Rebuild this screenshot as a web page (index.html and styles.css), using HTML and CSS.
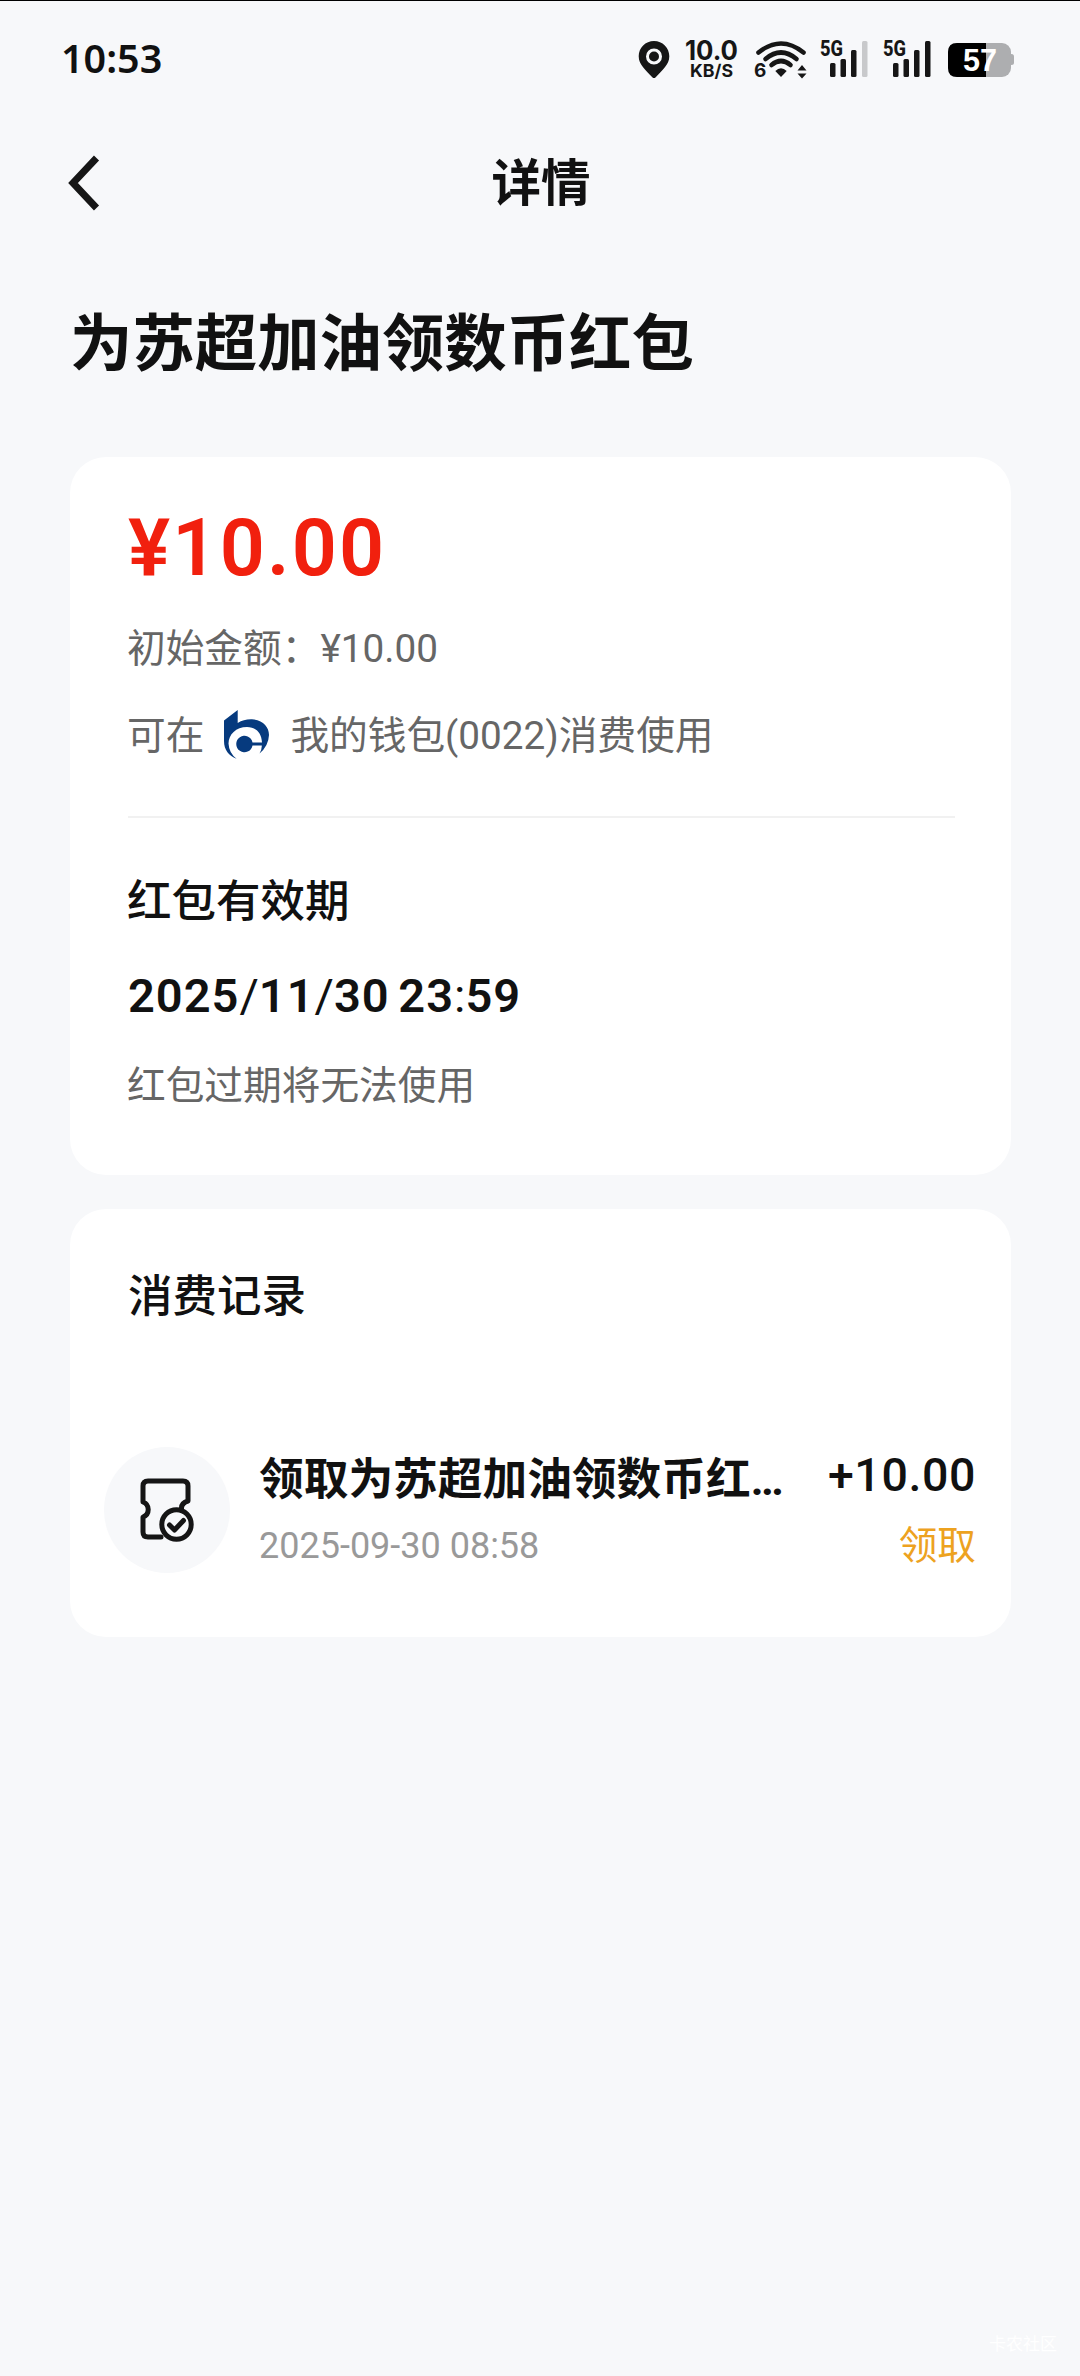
FILE: index.html
```html
<!DOCTYPE html>
<html lang="zh-CN">
<head>
<meta charset="utf-8">
<title>详情</title>
<link rel="stylesheet" href="styles.css">
</head>
<body>
<div class="screen">
  <header class="status">
    <span class="clock">10:53</span>
    <div class="indicators">
      <svg class="pin" width="32" height="40" viewBox="0 0 32 40"><path fill-rule="evenodd" d="M16 1C7.500 1 .7 7.800.7 16.200C.7 25 8 30 14.300 37.200Q16 39 17.700 37.200C24 30 31.300 25 31.300 16.200C31.300 7.800 24.500 1 16 1ZM16 8.500a8 8 0 1 1 0 16a8 8 0 0 1 0-16Z"/><circle cx="16" cy="16.500" r="5"/></svg>
      <svg class="speed" width="56" height="40" viewBox="0 0 56 40"><text x="1" y="20" font-size="27" textLength="53" lengthAdjust="spacingAndGlyphs">10.0</text><text x="6" y="36.500" font-size="17.500" textLength="43" lengthAdjust="spacingAndGlyphs">KB/S</text></svg>
      <svg class="wifi" width="54" height="40" viewBox="0 0 54 40"><g class="arc"><path d="M4.500 12.500Q27-5.500 49.500 12.500"/><path d="M11.500 19Q27 6 42.500 19"/><path d="M17.500 25Q27 17 36.500 25"/></g><path d="M21.300 31Q27 25.500 32.700 31L27 37Z"/><path d="M43.500 30.500L48 25L52.500 30.500ZM43.500 33.500H52.500L48 38.500Z"/><text x="0" y="37" font-size="19">6</text></svg>
      <svg class="signal" width="49" height="40" viewBox="0 0 49 40"><text x="0" y="16" font-size="22" textLength="23" lengthAdjust="spacingAndGlyphs">5G</text><rect x="10" y="23" width="5.500" height="14" rx="1.500"/><rect x="20.500" y="19" width="5.500" height="18" rx="1.500"/><rect x="31" y="10" width="5.500" height="27" rx="1.500"/><rect class="off" x="42" y="1" width="5.500" height="36" rx="1.500"/></svg>
      <svg class="signal" width="49" height="40" viewBox="0 0 49 40"><text x="0" y="16" font-size="22" textLength="23" lengthAdjust="spacingAndGlyphs">5G</text><rect x="10" y="23" width="5.500" height="14" rx="1.500"/><rect x="20.500" y="19" width="5.500" height="18" rx="1.500"/><rect x="31" y="10" width="5.500" height="27" rx="1.500"/><rect x="42" y="1" width="5.500" height="36" rx="1.500"/></svg>
      <svg class="battery" width="67" height="40" viewBox="0 0 67 40"><rect class="spare" x="0" y="3" width="63" height="34" rx="9"/><rect class="spare" x="61" y="14" width="5" height="11" rx="2.500"/><path class="charge" d="M9 3H38V37H9Q0 37 0 28V12Q0 3 9 3Z"/><text class="level" x="15" y="31.300" font-size="31" textLength="34" lengthAdjust="spacingAndGlyphs">57</text></svg>
    </div>
  </header>
  <nav class="navbar">
    <svg class="back" width="36" height="60" viewBox="0 0 36 60"><path d="M30.500 5L7 30L30.500 55"/></svg>
    <span class="nav-title">详情</span>
  </nav>
  <h1 class="heading">为苏超加油领数币红包</h1>
  <section class="card summary">
    <div class="amount">¥10.00</div>
    <div class="note initial">初始金额：¥10.00</div>
    <div class="note wallet"><span>可在</span>
      <svg class="bank" width="46" height="50" viewBox="0 0 46 50"><path d="M0 10.500L13.700 0V13Q20 9 28 9.300C39 10 45 17 45 25Q44.500 36 35.500 43.500Q38 39 37.800 35.500H28.500A8.200 8.200 0 1 1 28.500 32.500H38C37.500 22 31 17 23 17C12 17 4.500 24.500 4.500 33.500Q5 43 12.500 48.700C5 46 0 40 0 31Z"/></svg>
      <span>我的钱包(0022)消费使用</span></div>
    <div class="rule"></div>
    <h2 class="subhead">红包有效期</h2>
    <div class="expiry">2025<i>/</i>11<i>/</i>30 23<i>:</i>59</div>
    <div class="note warning">红包过期将无法使用</div>
  </section>
  <section class="card records">
    <h2 class="subhead">消费记录</h2>
    <div class="record">
      <div class="badge"><svg width="54" height="64" viewBox="0 0 54 64"><path d="M21 59H8Q3 59 3 54V39A8 8 0 0 0 3 24V8Q3 3 8 3H43Q48 3 48 8V23Q41 25 41.500 31"/><circle cx="36.500" cy="46.500" r="14.700"/><path d="M29.500 47L34.500 52L43.500 42.500"/></svg></div>
      <div class="record-main"><div class="record-title">领取为苏超加油领数币红…</div><div class="record-time">2025-09-30 08:58</div></div>
      <div class="record-side"><div class="delta">+10.00</div><div class="state">领取</div></div>
    </div>
  </section>
  <footer class="mark">卡农社区</footer>
</div>
</body>
</html>
```
FILE: styles.css
```css
* { box-sizing: border-box; margin: 0; padding: 0; }
body { background: #f7f8fa; font-family: Roboto, "Noto Sans CJK SC", sans-serif; color: #111; }
svg { display: block; flex: none; fill: #161616; overflow: visible; }
.screen { width: 1080px; height: 2376px; border-top: 1px solid #000; display: flex; flex-direction: column; }
.status { height: 117px; padding: 0 65px 0 61px; display: flex; justify-content: space-between; align-items: center; }
.clock { padding-bottom: 4px; font: 600 39.500px/40px "Noto Sans", sans-serif; white-space: nowrap; }
.indicators { display: flex; align-items: center; }
.indicators text { font-family: Inter, sans-serif; font-weight: 700; }
.indicators .signal text { font-family: Roboto, sans-serif; font-weight: 800; }
.pin { margin-right: 14px; }
.speed { margin-right: 14px; }
.wifi { margin-right: 12px; }
.signal { margin-right: 14px; }
.signal + .battery { margin-left: 2px; }
.arc { fill: none; stroke: #161616; stroke-width: 4.600; stroke-linecap: round; }
.off { fill: #c8c9cb; }
.spare { fill: #adaeb0; }
.charge { fill: #000; }
.indicators .level { fill: #fff; font-family: "Liberation Sans", sans-serif; }
.navbar { height: 130px; padding: 0 64px 0 66px; display: grid; grid-template-columns: 36px 1fr 36px; align-items: center; }
.back { fill: none; stroke: #161616; stroke-width: 7; }
.nav-title { padding-top: 2px; font-size: 49.500px; font-weight: 700; line-height: 60px; text-align: center; }
.heading { height: 80px; margin: 57px 0 0 70px; font-size: 62.400px; font-weight: 700; line-height: 80px; }
.card { width: 941px; margin-left: 70px; background: #fff; border-radius: 36px; display: flex; flex-direction: column; }
.summary { height: 718px; margin-top: 72px; padding: 46px 56px 0 58px; }
.amount { height: 90px; line-height: 90px; font-size: 79px; font-weight: 600; color: #f1200e; letter-spacing: 2.200px; }
.note { height: 56px; line-height: 56px; font-size: 38.700px; color: #666; white-space: nowrap; }
.initial { margin-top: 28px; margin-left: -1px; }
.wallet { margin-top: 31px; margin-left: -1px; display: flex; align-items: center; }
.bank { fill: #063a7e; margin: -3px 20px 0 20px; }
.rule { height: 2px; margin-top: 52px; background: #f1f1f1; }
.subhead { height: 60px; line-height: 60px; font-size: 44.500px; font-weight: 500; }
.summary .subhead { margin-top: 54px; margin-left: -1px; }
.expiry { height: 60px; margin-top: 34px; line-height: 60px; font-size: 47px; font-weight: 600; letter-spacing: 1px; word-spacing: -4px; white-space: nowrap; }
.expiry i { font-style: normal; font-weight: 400; letter-spacing: 0; }
.warning { margin-top: 32px; margin-left: -1px; }
.records { height: 428px; margin-top: 34px; padding: 58px 35px 0 34px; }
.records .subhead { margin-left: 24px; }
.record { height: 126px; margin-top: 120px; display: flex; }
.badge { width: 126px; height: 126px; border-radius: 50%; background: #f7f8fa; display: flex; align-items: center; justify-content: center; }
.badge svg { fill: none; stroke: #151515; stroke-width: 5; stroke-linecap: round; stroke-linejoin: round; }
.record-main { flex: 1; margin-left: 29px; }
.record-title { height: 60px; margin-top: 3px; line-height: 60px; font-size: 44.700px; font-weight: 700; white-space: nowrap; }
.record-time { height: 50px; margin-top: 11px; line-height: 50px; font-size: 36px; color: #999; }
.record-side { text-align: right; }
.delta { height: 60px; margin-top: -2px; line-height: 60px; font-size: 46.500px; font-weight: 500; letter-spacing: .6px; }
.state { height: 56px; line-height: 56px; margin-top: 13px; font-size: 38.700px; color: #eda21f; }
.mark { margin: auto 23px 20px auto; font-size: 17px; line-height: 24px; color: #fff; }
```
